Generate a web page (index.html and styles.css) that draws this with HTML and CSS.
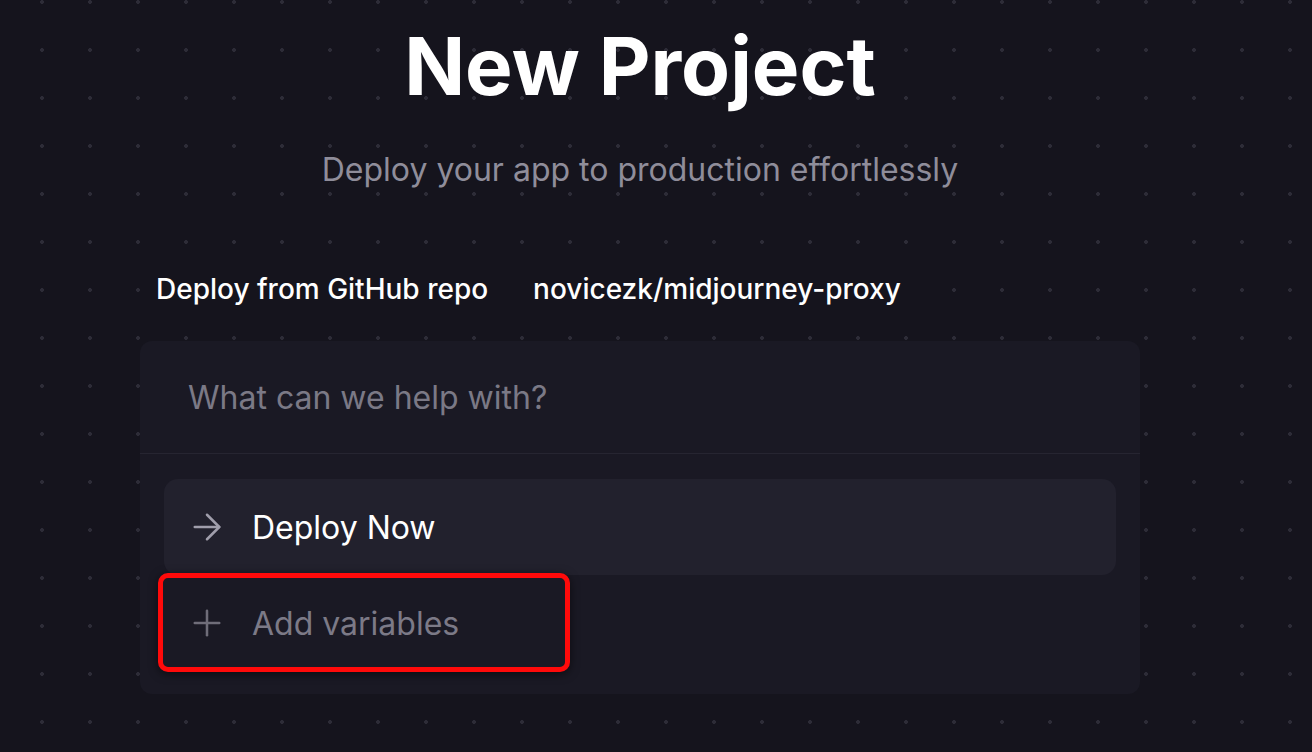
FILE: index.html
```html
<!DOCTYPE html>
<html lang="en">
<head>
<meta charset="utf-8">
<title>New Project</title>
<link rel="stylesheet" href="styles.css">
</head>
<body>
<div class="shell">
  <main class="page">
    <h1 class="title">New Project</h1>
    <p class="subtitle">Deploy your app to production effortlessly</p>
    <div class="source">
      <span class="source-item">Deploy from GitHub repo</span>
      <span class="source-item">novicezk/midjourney-proxy</span>
    </div>
    <section class="card">
      <div class="prompt">What can we help with?</div>
      <div class="options">
        <div class="option option-active">
          <svg class="icon icon-arrow" viewBox="0 0 24 24" fill="none" stroke="currentColor" stroke-width="1.45" stroke-linecap="round" stroke-linejoin="round"><path d="M5 12h14"/><path d="M12 5l7 7-7 7"/></svg>
          <span class="option-label">Deploy Now</span>
        </div>
        <div class="option option-muted">
          <svg class="icon icon-plus" viewBox="0 0 24 24" fill="none" stroke="currentColor" stroke-width="1.45" stroke-linecap="round" stroke-linejoin="round"><path d="M5 12h14"/><path d="M12 5v14"/></svg>
          <span class="option-label">Add variables</span>
        </div>
        <div class="highlight"></div>
      </div>
    </section>
  </main>
</div>
</body>
</html>
```

FILE: styles.css
```css
* { box-sizing: border-box; }

html, body {
  margin: 0;
  padding: 0;
}

body {
  width: 1312px;
  height: 752px;
  overflow: hidden;
  background-color: #15141d;
  background-image: radial-gradient(circle, #2d2c37 0, #2d2c37 1.6px, transparent 2.2px);
  background-size: 48px 48px;
  background-position: 18px 26px;
  font-family: "Inter", "Noto Sans", "Liberation Sans", sans-serif;
  color: #ffffff;
}

.shell {
  display: flex;
  justify-content: center;
  padding-right: 32px;
}

.page {
  width: 1000px;
  display: flex;
  flex-direction: column;
  align-items: center;
  padding-top: 18px;
}

.title {
  margin: 0;
  font-size: 80px;
  font-weight: 700;
  line-height: 96px;
  letter-spacing: 0;
  color: #ffffff;
}

.subtitle {
  margin: 36px 0 0;
  font-size: 32px;
  line-height: 40px;
  font-weight: 400;
  color: #8f8d9a;
}

.source {
  align-self: flex-start;
  display: flex;
  gap: 45px;
  margin-top: 76px;
  padding: 6px 16px;
  background-color: #15141d;
  font-size: 28px;
  line-height: 34px;
  font-weight: 500;
  color: #ffffff;
}

.card {
  align-self: stretch;
  margin-top: 29px;
  background-color: #1a1924;
  border-radius: 12px;
}

.prompt {
  height: 113px;
  display: flex;
  align-items: center;
  padding: 0 48px;
  border-bottom: 1px solid #262531;
  font-size: 32px;
  color: #7b7986;
}

.options {
  position: relative;
  padding: 25px 24px 23px;
  display: flex;
  flex-direction: column;
}

.option {
  height: 96px;
  display: flex;
  align-items: center;
  gap: 24px;
  padding-left: 22px;
  border-radius: 14px;
  font-size: 32px;
}

.option-active {
  background-color: #22212d;
  color: #ffffff;
}

.option-active .icon { color: #a09eab; }

.option-muted {
  color: #7c7a87;
}

.option-muted .icon { color: #6f6d79; }

.icon {
  width: 42px;
  height: 42px;
  flex: none;
}

.highlight {
  position: absolute;
  left: 18px;
  top: 119px;
  width: 412px;
  height: 99px;
  border: 5px solid #ff0a0a;
  border-radius: 10px;
  box-shadow: 0 2px 10px rgba(0, 0, 0, 0.55);
  pointer-events: none;
}
```
